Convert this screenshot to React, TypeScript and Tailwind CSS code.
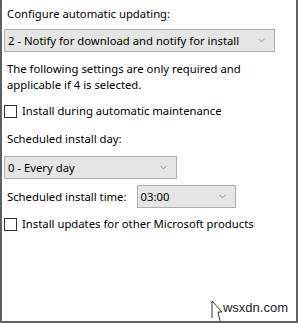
import { ChevronDown } from 'lucide-react';

function Select({ value, width }: { value: string; width: string }) {
  return (
    <div
      className={`flex h-[23px] ${width} items-center justify-between border border-[#adadad] bg-[#e5e5e5] pl-[3px] pr-[7px]`}
    >
      <span>{value}</span>
      <ChevronDown className="h-[11px] w-[11px] text-[#6a6a6a]" strokeWidth={1.5} />
    </div>
  );
}

function Check({ label }: { label: string }) {
  return (
    <label className="flex items-center gap-[5px]">
      <span className="h-[13px] w-[13px] border border-[#333333] bg-white" />
      <span>{label}</span>
    </label>
  );
}

export default function App() {
  return (
    <div
      className="relative flex h-[323px] w-[298px] flex-col border-b-2 border-l-2 border-r-2 border-[#5f5f5f] bg-white pl-[2px] text-[11.3px] leading-[16px] text-black"
      style={{ fontFamily: '"Noto Sans", "Liberation Sans", sans-serif' }}
    >
      <div className="mt-[6px] pl-[3px]">Configure automatic updating:</div>
      <div className="mt-[7px]">
        <Select value="2 - Notify for download and notify for install" width="w-[271px]" />
      </div>
      <div className="mt-[9px] pl-[3px]">
        The following settings are only required and
        <br />
        applicable if 4 is selected.
      </div>
      <div className="mt-[10px]">
        <Check label="Install during automatic maintenance" />
      </div>
      <div className="mt-[12px] pl-[3px]">Scheduled install day:</div>
      <div className="mt-[9px]">
        <Select value="0 - Every day" width="w-[173px]" />
      </div>
      <div className="mt-[6px] flex items-center gap-[10px]">
        <span className="pl-[3px]">Scheduled install time:</span>
        <Select value="03:00" width="w-[99px]" />
      </div>
      <div className="mt-[8px]">
        <Check label="Install updates for other Microsoft products" />
      </div>

      <div className="absolute bottom-[0px] right-[8px] flex items-end">
        <svg width="12" height="22" viewBox="0 0 12 22" className="mb-[-1px]">
          <path d="M1 1 L1 18 M1 1 L11 12 L7 12 L9 21" stroke="#333" strokeWidth="1" fill="none" />
        </svg>
        <span
          className="mb-[6px] text-[13px] leading-[14px] text-[#222]"
          style={{ fontFamily: '"Liberation Sans", Arial, sans-serif' }}
        >
          wsxdn.com
        </span>
      </div>
    </div>
  );
}
